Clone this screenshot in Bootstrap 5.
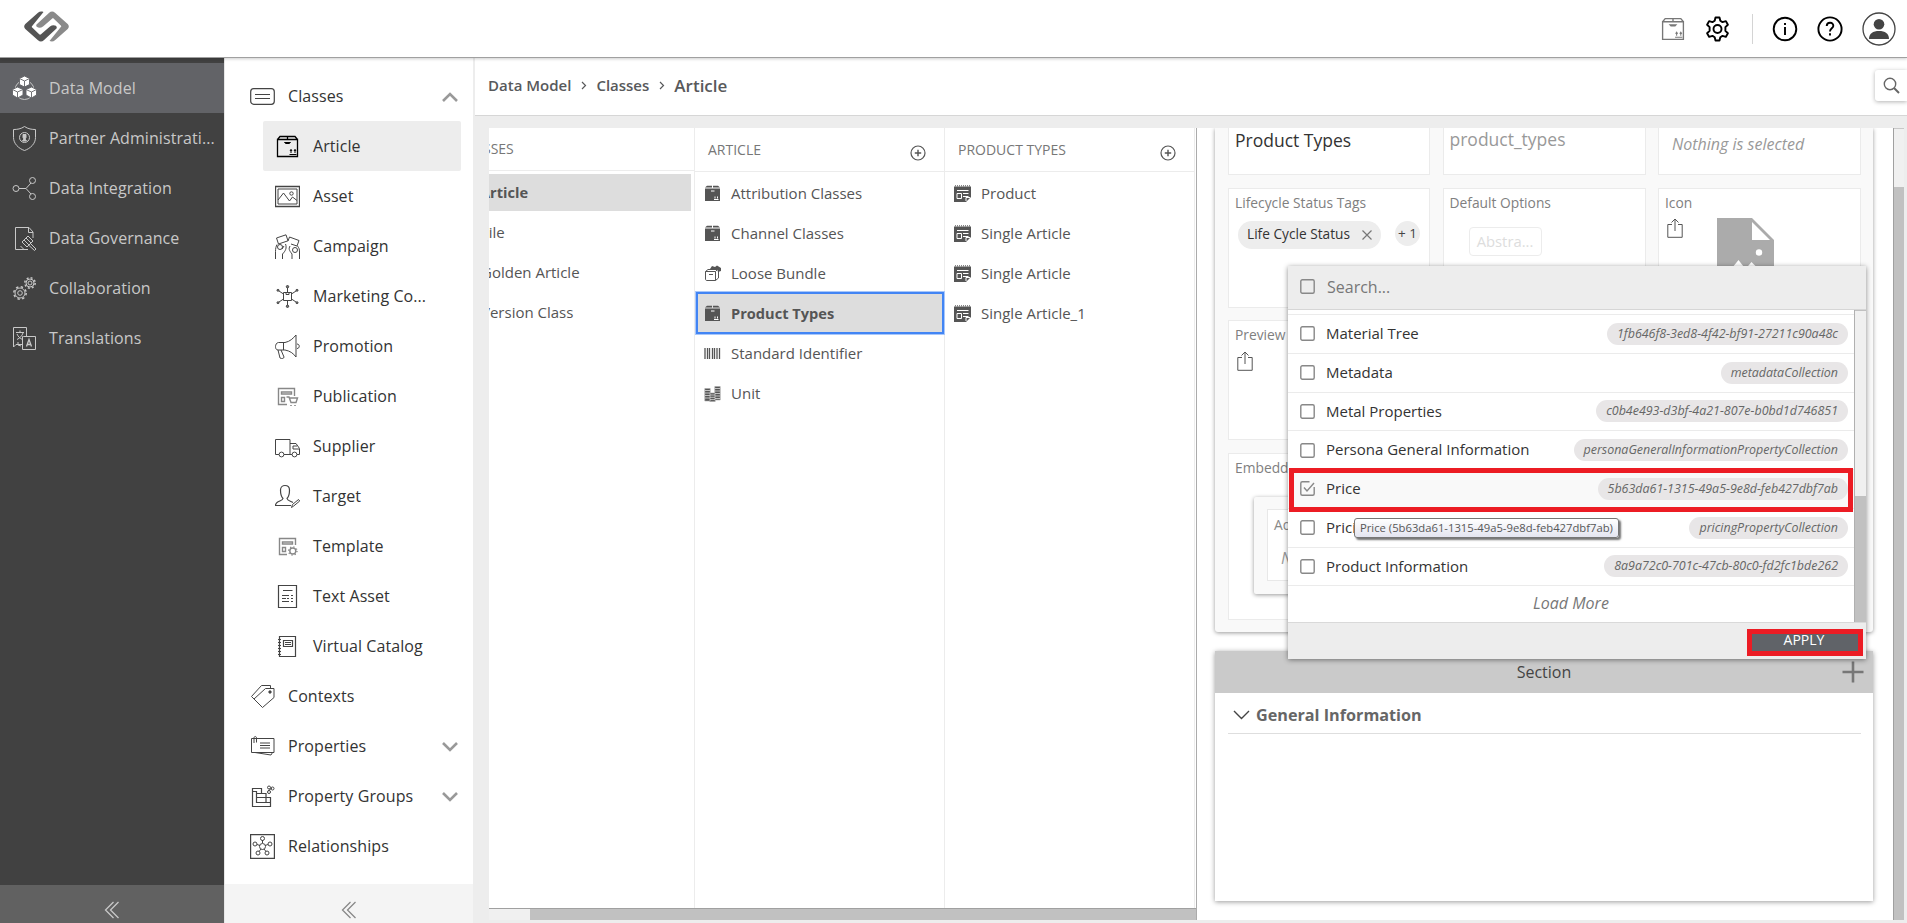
<!DOCTYPE html>
<html lang="en">
<head>
    <meta charset="UTF-8">
    <meta name="viewport" content="width=device-width, initial-scale=1.0">
    <title>Data Model - Classes - Article</title>
    <link rel="stylesheet" href="https://cdn.jsdelivr.net/npm/bootstrap@5.3.0/dist/css/bootstrap.min.css">
    <style>
        body { font-family: "Open Sans", "Noto Sans", sans-serif; font-size: 16px; line-height: 1.25; color: #333; background: #ededed; height: 923px; overflow: hidden; fill: none; stroke: currentColor; stroke-width: 1; }
        svg { display: block; flex: none; }
        .ic { width: 25px; height: 25px; }
        .topbar { height: 58px; border-bottom: 1px solid #a0a0a0; box-shadow: 0 1px 3px rgba(0,0,0,.2); z-index: 5; padding: 0 11px 0 24px; color: #000; }
        .topbar .logo { margin-top: -4px; }
        .topbar .divider { width: 1px; height: 30px; background: #d4d4d4; margin: 0 19px 0 22px; }
        .topbar .tool { margin-left: 19px; }
        .workspace { height: 865px; }

        /* left bars */
        .mainnav { width: 224px; background: #414141; color: #c8c8c8; padding-top: 5px; }
        .mainnav .entry { height: 50px; padding-left: 12px; gap: 12px; letter-spacing: .08px; }
        .mainnav .entry.current { background: #626367; }
        .mainnav .foldbar { height: 38px; background: #616161; padding-top: 11px; }
        .subnav { width: 249px; background: #fff; border-left: 1px solid #e6e6e6; padding-top: 13px; color: #333; letter-spacing: .08px; }
        .subnav .entry { height: 50px; flex: none; padding-left: 25px; gap: 13px; }
        .subnav .entry svg { color: #444; }
        .subnav .entry .chev { color: #999; margin: 2px 15px 0 auto; }
        .subnav .child { margin: 0 12px 0 38px; padding-left: 12px; border-radius: 2px; }
        .subnav .child.current { background: #ededed; }
        .subnav .child.current svg { color: #000; }
        .subnav .peek { height: 13px; overflow: hidden; }
        .subnav .foldbar { height: 39px; background: #f4f4f4; padding-top: 12px; color: #888; flex: none; }

        /* content */
        .crumbs { height: 58px; background: #fff; border-bottom: 1px solid #d6d6d6; padding: 0 0 2px 13px; margin-left: 2px; color: #58595b; font-weight: 600; font-size: 15px; }
        .crumbs .last { font-size: 17px; }
        .crumbs .sep { margin: 0 9px 0 10px; }
        .findbtn { width: 32px; height: 31px; background: #fff; border-radius: 3px 0 0 3px; box-shadow: 0 1px 4px rgba(0,0,0,.3); color: #666; margin-top: -1px; }
        .stage { margin: 12px 3px 3px 16px; height: 792px; background: #fff; }
        .tree { width: 708px; border-right: 1px solid #ababab; font-size: 15px; color: #555; }
        .level { width: 250px; border-right: 1px solid #ececec; flex: none; }
        .level.cut { width: 206px; overflow: hidden; }
        .level .head { height: 44px; border-bottom: 1px solid #ececec; padding: 0 18px 0 13px; font-size: 14px; color: #777; }
        .level .head svg { color: #555; margin-top: 7px; }
        .level .nodes { padding-top: 1px; }
        .level .node { height: 40px; padding-left: 9px; gap: 10px; }
        .level .node svg { width: 17px; height: 17px; color: #555; }
        .level .node.current { background: #ddd; font-weight: 700; font-size: 14.6px; margin: -1px 0 -1px 1px; height: 42px; border: 2px solid #4285f4; outline: 1px solid #a8c7fa; padding-left: 6px; }
        .level.cut .head { height: 43px; padding-left: 0; }
        .level.cut .head span { margin-left: -31px; }
        .level.cut .node { margin-left: -8px; padding-left: 0; position: relative; top: 1px; }
        .level.cut .picked { height: 37px; background: #ddd; font-weight: 700; font-size: 14.6px; margin: 3px 3px 0 0; }
        .level.cut .picked span { margin-left: -9px; }
        .hscroll { height: 12px; background: #c1c1c1; border-top: 1px solid #a0a0a0; }
        .hscroll div { width: 41px; background: #f0f0f0; height: 11px; }

        .sheet { padding-left: 18px; flex: 1; }
        .panel1 { width: 658px; height: 504px; background: #f9f9f9; padding: 0 12px 0 13px; border-radius: 0 0 3px 3px; box-shadow: 0 1px 4px rgba(0,0,0,.4); }
        .fields { display: grid; grid-template-columns: 202px 203px 203px; grid-template-rows: 47px 120px 120px 167px; column-gap: 12.5px; row-gap: 12.7px; }
        .cell { background: #fff; border: 1px solid #ebebeb; padding: 5px 6px; font-size: 13.8px; color: #808080; }
        .cell.first { border-top: 0; padding-top: 1px; font-size: 17.5px; }
        .cell.first.name { color: #333; padding-top: 2px; }
        .cell.first.none { font-size: 16px; padding: 6px 0 0 13px; }
        .cell.wide { grid-column: span 3; }
        .cell .share { color: #555; margin: 7px 0 0 2px; }
        .chips { margin-top: 10px; }
        .chip { width: 143px; height: 28px; border-radius: 14px; background: #ededed; color: #333; font-size: 13.7px; padding: 0 9px 2px; margin-left: 3px; }
        .chip svg { color: #777; margin-top: 2px; }
        .chip-more { width: 25px; height: 25px; border-radius: 50%; background: #ededed; color: #444; font-size: 13.5px; margin-left: 14px; }
        .ghost { width: 73px; height: 29px; border: 1px solid #ececec; border-radius: 4px; color: #ddd; font-size: 14.8px; margin: 16px 0 0 19px; }
        .nofile { margin-left: 34px; margin-top: 7px; }
        .nested { margin: 21px 18px 0 19px; height: 97px; background: #f9f9f9; box-shadow: 0 1px 4px rgba(0,0,0,.4); border-radius: 2px; padding: 12px 13px; }
        .nested div { height: 72px; border: 1px solid #e8e8e8; background: #fff; padding: 6px; color: #888; }
        .nested p { font-size: 16px; padding: 14px 7px; color: #999; }
        .panel2 { width: 658px; height: 250px; margin-top: 19px; background: #fff; box-shadow: 0 1px 5px rgba(0,0,0,.4); }
        .panel2 .title { height: 42px; background: #cacaca; color: #444; padding-right: 9px; }
        .panel2 .title svg { color: #777; margin-top: -1px; }
        .panel2 .group { height: 41px; margin: 0 12px 0 13px; border-bottom: 1px solid #dedede; font-weight: 700; font-size: 16.2px; color: #666; padding: 4px 0 0 5px; gap: 6px; }
        .panel2 .group svg { color: #444; }
        .vscroll { width: 11px; background: #c1c1c1; border-left: 1px solid #a0a0a0; }
        .vscroll div { height: 59px; background: #f0f0f0; border-top: 1px solid #c8c8c8; }

        /* picker that opens over the form */
        .picker { position: absolute; left: 1288px; top: 266px; width: 578px; height: 393px; background: #fff; box-shadow: 0 1px 5px rgba(0,0,0,.45); }
        .picker .find { height: 44px; background: #ededed; border-bottom: 1px solid #d6d6d6; padding: 0 0 2px 12px; gap: 12px; color: #777; }
        .picker .list { width: 566px; padding-top: 4px; height: 312px; }
        .picker .opt { height: 38.75px; border-top: 1px solid #ebebeb; padding: 0 6px 0 12px; gap: 11px; font-size: 15px; color: #333; }
        .picker .opt.chosen { background: #f9f9f9; }
        .picker .opt .label { margin-top: -1px; }
        .picker svg.box { width: 15px; height: 15px; color: #888; stroke-width: 1.4; }
        .picker .code { background: #e8e6e7; border-radius: 11px; height: 22px; line-height: 21px; padding: 0 10px; font-size: 12.45px; font-style: italic; color: #666; }
        .picker .more { border-top: 1px solid #ebebeb; height: 37px; font-style: italic; color: #777; padding-bottom: 2px; }
        .picker .bar { width: 12px; background: #c1c1c1; border-left: 1px solid #b0b0b0; }
        .picker .bar div { height: 186px; background: #f0f0f0; border-top: 1px solid #c0c0c0; }
        .picker .foot { height: 37px; background: #ededed; border-top: 1px solid #d9d9d9; }
        .ring { position: absolute; border: 5px solid #ec1c24; }
        .ring.price { left: 1289px; top: 468px; width: 564px; height: 44px; }
        .ring.apply { left: 1747px; top: 629px; width: 116px; height: 27px; background: #606368; color: #fff; font-size: 14px; line-height: 12px; padding-right: 2px; }
        .hint { position: absolute; left: 1354px; top: 518px; width: 265px; height: 20px; border: 1px solid #767676; border-radius: 3px; background: linear-gradient(#fff, #e4e5f0); box-shadow: 2px 2px 2px rgba(0,0,0,.55); font-size: 11.25px; line-height: 18px; color: #575757; padding-left: 5px; white-space: nowrap; }
    </style>
</head>
<body>
    <!-- icon set -->
    <svg class="d-none">
        <symbol id="fold" viewBox="0 0 16 18"><path d="M9.500 1 1.500 9l8 8M14.500 1l-8 8 8 8" stroke-width="1.300"/></symbol>
        <symbol id="up" viewBox="0 0 16 10"><path d="M1 9l7-7 7 7" stroke-width="2.600"/></symbol>
        <symbol id="down" viewBox="0 0 16 10"><path d="M1 1l7 7 7-7" stroke-width="2.600"/></symbol>
        <symbol id="box" viewBox="0 0 25 25"><path d="M2.500 5.500v17h20v-17zM2.500 5.500 5 2.500h15l2.500 3M12.500 2.500v3" stroke-width="1.300"/><path d="M9.500 8.500h6l-1 1h-4zM14.500 20.500h7M16 19v-3.500M20 19v-3.500M15 17l1-1.500 1 1.500M19 17l1-1.500 1 1.500"/></symbol>
        <symbol id="asset" viewBox="0 0 25 25"><path d="M.5 2.500h24v20H.5z" stroke-width="1.300"/><path d="M3 5h19v15H3zM3 16l5.500-7 6 8 3-4 4.500 3.500"/><circle cx="16.500" cy="9.500" r="1.700"/></symbol>
        <symbol id="campaign" viewBox="0 0 25 25"><path d="M1.500 4 11 .8l2 6L3.500 10zM13 7l1.500-4L24 6.500 22 12l-6-2M.5 25v-7.500c0-3 .5-5 1.500-7M7.500 25v-5c3-3 4.500-6 3-10M9 12l-2 3M17 25v-5c-3-4-3.500-5-2-8M24.500 25v-7c0-3-.5-4-2-6"/><circle cx="5" cy="13" r="2.500"/><circle cx="20" cy="16" r="2.500"/></symbol>
        <symbol id="market" viewBox="0 0 25 25"><path d="M8.500 8.500h8v8h-8zM11 8.500v2h3v-2M12.500 8.500V4M12.500 16.500V21M8.500 10 4 7M16.500 10 21 7M8.500 15 4 18M16.500 15l4.500 3"/><g fill="#777"><circle cx="12.500" cy="2.700" r="1.200"/><circle cx="12.500" cy="22.300" r="1.200"/><circle cx="3" cy="6.300" r="1"/><circle cx="22" cy="6.300" r="1"/><circle cx="3" cy="18.700" r="1"/><circle cx="22" cy="18.700" r="1"/></g></symbol>
        <symbol id="promo" viewBox="0 0 25 25"><path d="M7 8.500h3c5-1 8-4 11-7.500v22c-3-4-6-6-11-7H3C1 16 .5 14 .5 12.500S1.500 8.500 3.500 8.500H7M8.500 8.500V16M3 16l2 8c2 1 4 .5 4-1l-3-7M22 10c3 0 3 4.500 0 4.500"/></symbol>
        <symbol id="publish" viewBox="0 0 25 25"><g stroke="#888"><path d="M12 20.500H3.500v-16h16V12M6.500 8h10v2h-10zM6.500 13.500h3v4h-3zM11.500 13h2.500l2 5.500h5l1.500-4.500h-8" stroke-width="1.400"/><path d="M16 21v1M20 21v1" stroke-width="1.600"/></g></symbol>
        <symbol id="truck" viewBox="0 0 25 25"><path d="M4 20.500H.5V5.500H15v15H9M15 9.500h6l3.500 5v6H22M15 20.500h2M18 12v3h6M18 12h4"/><circle cx="6.500" cy="20.500" r="2.400"/><circle cx="19.500" cy="20.500" r="2.400"/></symbol>
        <symbol id="target" viewBox="0 0 25 25"><path d="M16 21.500H.5c0-5 7-4 7.500-7C5.500 12 5.500 9 5.500 6c0-6 9-6 9 0 0 3 0 6-2.500 8.500.3 2 3 2.500 6 4" stroke-width="1.200"/><path d="m16.500 23.500 1-3 6-5 1.200 1.500-6 5z"/></symbol>
        <symbol id="template" viewBox="0 0 25 25"><g stroke="#888"><path d="M12 20.500H4.500v-16h16V11M7.500 8h10v2h-10zM7.500 13.500h3v4h-3z" stroke-width="1.400"/><circle cx="17.800" cy="17" r="3" stroke-width="1.400"/><circle cx="17.800" cy="17" r="4.200" stroke-width="1.300" stroke-dasharray="1.200 2.100"/></g></symbol>
        <symbol id="text" viewBox="0 0 25 25"><path d="M3.500 1.500h18v22h-18zM8 6.500h9.500M7 11.500h7M16 11.500h2M7 14.500h4M12 14.500h2M16 14.500h2M7 17.500h7M16 17.500h2" stroke-width="1.200"/></symbol>
        <symbol id="catalog" viewBox="0 0 25 25"><path d="M4.500 2.500h16v20h-16zM8.500 6.500h9v6h-9zM10 8.500h6M10 10.500h6M3 5.500h3M3 8.500h3M3 11.500h3M3 14.500h3M3 17.500h3M3 20.500h3" stroke-width="1.200"/></symbol>
        <symbol id="classes" viewBox="0 0 25 25"><rect x=".7" y="4.700" width="23.600" height="15.600" rx="3" stroke-width="1.200"/><path d="M5 10.500h15M5 14.500h15" stroke-width="1.200"/></symbol>
        <symbol id="tag" viewBox="0 0 25 25"><path d="M12.500 23.500 1.500 12.500 11.500 1.500h9v3M4 15 15.500 4.500h8.500v9l-11.500 10"/><circle cx="20" cy="8" r="1.200" fill="currentColor"/></symbol>
        <symbol id="props" viewBox="0 0 25 25"><path d="M1.500 4.500h22.500v14H1.500zM10 9h10M10 11.500h10M10 14h10M5 18.500l16 2.500 1.500-2.500M4 9V4c0-2 2.500-2 2.500 0v4.500"/></symbol>
        <symbol id="groups" viewBox="0 0 25 25"><path d="M2.500 22.500v-18h9v5H16v4h4.500v9zM6.500 9.500v9h14M2.500 7.500h4v2h9.500M7 13.500h9v5" stroke-width="1.200"/><circle cx="19" cy="3.500" r="1.500"/><circle cx="22.500" cy="4.500" r="1.500"/><circle cx="19" cy="8" r="1.500"/><path d="m18 7 4-3"/></symbol>
        <symbol id="relations" viewBox="0 0 25 25"><path d="M.6.6h23.800v23.800H.6z" stroke-width="1.200"/><path d="M12.500 6v3M7 10.500l3 1M18 10.500l-3 1M9 17.500l2-2.500M16 17.500 14 15"/><circle cx="12.500" cy="12.500" r="3"/><circle cx="12.500" cy="4.500" r="2"/><circle cx="5" cy="10" r="2"/><circle cx="20" cy="10" r="2"/><circle cx="8" cy="19" r="2"/><circle cx="17" cy="19" r="2"/></symbol>
        <symbol id="linked" viewBox="0 0 25 25"><circle cx="21" cy="3" r="3"/><circle cx="5" cy="20" r="3"/><path d="m7 18 12-13"/></symbol>
        <symbol id="cubes" viewBox="0 0 25 25"><circle cx="12.500" cy="14" r="9.500"/><g fill="#fff" stroke="#626367" stroke-width=".9"><path d="m12.500 0 5 2.500v6l-5 2.500-5-2.500v-6z"/><path d="m5.500 11 5.500 2.500V19L5.500 22 .5 19v-5.500z"/><path d="m19.500 11 5 2.500V19l-5 3-5.500-3v-5.500z"/><path d="m7.500 2.500 5 2.500 5-2.500M12.500 5v6M.5 13.500 5.500 16l5.500-2.500M5.500 16v6M14 13.500l5.500 2.500 5-2.500M19.500 16v6"/></g></symbol>
        <symbol id="shield" viewBox="0 0 25 25"><path d="M12.500.5C9 3 5 3.500 1.500 3.500v8c0 6 5 11 11 13 6-2 11-7 11-13v-8c-3.500 0-7.500-.5-11-3z"/><circle cx="12.500" cy="11.500" r="5"/><path d="M11 8.500h3v3l-1 1.500 1.500 2h-4l1.500-2-1-1.500z" fill="currentColor"/></symbol>
        <symbol id="nodes" viewBox="0 0 25 25"><circle cx="4" cy="12.500" r="3"/><circle cx="20.500" cy="4.500" r="3"/><circle cx="20.500" cy="20.500" r="3"/><path d="M7 12.500h7l5-5.500M14 12.500l5 5.500"/></symbol>
        <symbol id="gavel" viewBox="0 0 25 25"><path d="M16 23.500H3.500v-22H17l4 4.500v6M16.500 1.500v5H21"/><path d="m10 16 6-6 5 5-6 6zM12 14l5 5M14 12l5 5M18 17l6 6-1.500 1.500-6-5.500M8.500 20l3 3"/></symbol>
        <symbol id="gears" viewBox="0 0 25 25"><circle cx="8" cy="17" r="2.300"/><circle cx="8" cy="17" r="5"/><circle cx="8" cy="17" r="6.200" stroke-width="1.500" stroke-dasharray="2.400 2.470"/><circle cx="18" cy="7" r="2"/><circle cx="18" cy="7" r="4"/><circle cx="18" cy="7" r="5.200" stroke-width="1.500" stroke-dasharray="2 2.080"/></symbol>
        <symbol id="translate" viewBox="0 0 25 25"><path d="M11 18.500H4L1.500 21V1.500h13V10M11.500 10.500h12v13h-13v-13zM4 6.500h8M8 4.500v2M5 8c1 2.500 3 4.500 5.500 5.500M11 7c-1 3-3 5-6 6.500M6 16v3l3 1"/><path d="m14.500 20.500 2.500-7 2.500 7M15.500 18.500h3" stroke-width="1.300"/></symbol>

        <symbol id="s-box" viewBox="0 0 17 17"><path d="M3 .8h5v1.700H1zM9 .8h5l2 1.700H9zM1 3.500h15V16H1z" fill="currentColor" stroke="none"/><path d="M7 6h3.500M10 14.500h4.500M11 13.500v-2M13.500 13.500v-2" stroke="#fff"/></symbol>
        <symbol id="s-bundle" viewBox="0 0 17 17"><path d="M1.500 6.500h10v9H3c-1 0-1.500-.5-1.500-1.500zM1.500 6.500 4 4.500h9.500l-2 2M11.500 15.500l3-2.500V4.500M5 9.500h4"/><path d="m6 4 2-3 3 1 2-1.500L17 3v3l-3 1-1-3z" fill="currentColor" stroke="none"/></symbol>
        <symbol id="s-bars" viewBox="0 0 17 17"><path d="M1 3v11M3.500 3v11M5.500 3v11M8.500 3v11M10.500 3v11M13 3v11M15.500 3v11" stroke-width="1.300"/></symbol>
        <symbol id="s-coins" viewBox="0 0 17 17"><g stroke="#aaa" fill="#555" stroke-width=".6"><path d="M.8 3.500h5.400V16H.8zM10.800 1.500h5.400V15h-5.400zM5.800 8h5.400v8.500H5.800z"/></g><path d="M1 5.500h5M1 8h5M1 10.500h5M1 13h5M11 3.500h5M11 6h5M11 8.500h5M11 11h5M11 13.500h5M6 10h5M6 12.300h5M6 14.600h5" stroke="#ddd" stroke-width=".8"/></symbol>
        <symbol id="s-sheet" viewBox="0 0 17 17"><path d="M0 1.500h17V12l-5 5H0z" fill="currentColor" stroke="none"/><path d="M1 .8h16" stroke-dasharray="1 1"/><path d="M3 5.500h11.500M3 8.500h4.500v5H3zM9 8.500h5.500M9 11.500h5.500M12 16v-3.500h4" stroke="#fff"/></symbol>

        <symbol id="plus" viewBox="0 0 16 16"><circle cx="8" cy="8" r="7" stroke-width="1.200"/><path d="M8 4.800v6.400M4.800 8h6.400" stroke-width="1.400"/></symbol>
        <symbol id="unchecked" viewBox="0 0 15 15"><rect x=".8" y=".8" width="13.400" height="13.400" rx="1.500"/></symbol>
        <symbol id="checked" viewBox="0 0 15 15"><path d="M9.500.8H2.300C1.300.8.8 1.300.8 2.300v10.400c0 1 .5 1.500 1.500 1.500h10.400c1 0 1.500-.5 1.500-1.500V6M4 6.500l3 3.500 7-8"/></symbol>
        <symbol id="share" viewBox="0 0 16 20"><path d="M5 6.500H.8v12.800h14.400V6.500H11M8 13V1M4.500 4.500 8 1l3.500 3.500"/></symbol>
        <symbol id="half" viewBox="0 0 45 31"><path stroke="none" d="M19.500.9c-2-.8-4-.6-5.500.8L1.300 13c-1.500 1.500-1.500 3.500 0 5L14 29.300c1.800 1.600 4 1.600 5.800 0L32.500 17.500c1.500-3-3.500-4.300-6.500-2L17 23.300c-.6.500-1.200.5-1.800 0L8.200 16.500c-.6-.6-.6-1 0-1.600z"/></symbol>
    </svg>

    <div class="topbar bg-white d-flex align-items-center position-relative">
        <svg class="logo" width="45" height="31" viewBox="0 0 45 31">
            <use href="#half" width="45" height="31" fill="#555"/>
            <use href="#half" width="45" height="31" fill="#8a8a8a" transform="rotate(180 22.500 15.500)"/>
        </svg>
        <svg class="ms-auto" width="26" height="26" viewBox="0 0 25 25" color="#777"><use href="#box"/></svg>
        <svg class="tool" width="25" height="26" viewBox="0 0 25 26" stroke-width="1.900"><path d="M10.500 1.500h4l.8 3.300 2.200 1.300 3.400-1 2 3.600-2.500 2.400v3.800l2.500 2.400-2 3.600-3.400-1-2.200 1.300-.8 3.300h-4l-.8-3.300-2.200-1.300-3.400 1-2-3.600 2.500-2.400v-3.800L2.100 8.700l2-3.600 3.400 1 2.200-1.300z" stroke-linejoin="round"/><circle cx="12.500" cy="13" r="4"/></svg>
        <div class="divider"></div>
        <svg width="26" height="26" viewBox="0 0 26 26" stroke-width="1.900"><circle cx="13" cy="13" r="11.300"/><path d="M13 11v8M13 7v2"/></svg>
        <svg class="tool" width="26" height="26" viewBox="0 0 26 26" stroke-width="1.900"><circle cx="13" cy="13" r="11.600"/><path d="M9.700 10c.3-4.500 7-4 6.600 0-.2 2.300-3.300 2.500-3.300 5.500M13 17.300v2.200"/></svg>
        <svg class="tool" width="34" height="34" viewBox="0 0 34 34" color="#444"><circle cx="17" cy="17" r="16" stroke-width="1.300"/><circle cx="17" cy="12.300" r="5.300" fill="#444" stroke="none"/><path d="M7 27c0-5.500 4-8 10-8s10 2.500 10 8z" fill="#444" stroke="none"/></svg>
    </div>

    <div class="workspace d-flex">
        <nav class="mainnav d-flex flex-column flex-shrink-0">
            <div class="entry current d-flex align-items-center"><svg class="ic"><use href="#cubes"/></svg>Data Model</div>
            <div class="entry d-flex align-items-center"><svg class="ic"><use href="#shield"/></svg>Partner Administrati...</div>
            <div class="entry d-flex align-items-center"><svg class="ic"><use href="#nodes"/></svg>Data Integration</div>
            <div class="entry d-flex align-items-center"><svg class="ic"><use href="#gavel"/></svg>Data Governance</div>
            <div class="entry d-flex align-items-center"><svg class="ic"><use href="#gears"/></svg>Collaboration</div>
            <div class="entry d-flex align-items-center"><svg class="ic"><use href="#translate"/></svg>Translations</div>
            <div class="foldbar mt-auto d-flex justify-content-center align-items-center"><svg width="16" height="18"><use href="#fold"/></svg></div>
        </nav>

        <nav class="subnav d-flex flex-column flex-shrink-0">
            <div class="entry d-flex align-items-center"><svg class="ic"><use href="#classes"/></svg>Classes<svg class="chev" width="16" height="10"><use href="#up"/></svg></div>
            <div class="entry child current d-flex align-items-center"><svg class="ic"><use href="#box"/></svg>Article</div>
            <div class="entry child d-flex align-items-center"><svg class="ic"><use href="#asset"/></svg>Asset</div>
            <div class="entry child d-flex align-items-center"><svg class="ic"><use href="#campaign"/></svg>Campaign</div>
            <div class="entry child d-flex align-items-center"><svg class="ic"><use href="#market"/></svg>Marketing Co...</div>
            <div class="entry child d-flex align-items-center"><svg class="ic"><use href="#promo"/></svg>Promotion</div>
            <div class="entry child d-flex align-items-center"><svg class="ic"><use href="#publish"/></svg>Publication</div>
            <div class="entry child d-flex align-items-center"><svg class="ic"><use href="#truck"/></svg>Supplier</div>
            <div class="entry child d-flex align-items-center"><svg class="ic"><use href="#target"/></svg>Target</div>
            <div class="entry child d-flex align-items-center"><svg class="ic"><use href="#template"/></svg>Template</div>
            <div class="entry child d-flex align-items-center"><svg class="ic"><use href="#text"/></svg>Text Asset</div>
            <div class="entry child d-flex align-items-center"><svg class="ic"><use href="#catalog"/></svg>Virtual Catalog</div>
            <div class="entry d-flex align-items-center"><svg class="ic"><use href="#tag"/></svg>Contexts</div>
            <div class="entry d-flex align-items-center"><svg class="ic"><use href="#props"/></svg>Properties<svg class="chev" width="16" height="10"><use href="#down"/></svg></div>
            <div class="entry d-flex align-items-center"><svg class="ic"><use href="#groups"/></svg>Property Groups<svg class="chev" width="16" height="10"><use href="#down"/></svg></div>
            <div class="entry d-flex align-items-center"><svg class="ic"><use href="#relations"/></svg>Relationships</div>
            <div class="peek"><div class="entry d-flex align-items-center"><svg class="ic"><use href="#linked"/></svg></div></div>
            <div class="foldbar mt-auto d-flex justify-content-center align-items-center"><svg width="16" height="18"><use href="#fold"/></svg></div>
        </nav>

        <main class="flex-grow-1">
            <div class="crumbs d-flex align-items-center">
                <span>Data Model</span>
                <svg class="sep" width="6" height="9" viewBox="0 0 6 9"><path d="M1 1l3.500 3.500L1 8" stroke-width="1.200"/></svg>
                <span>Classes</span>
                <svg class="sep" width="6" height="9" viewBox="0 0 6 9"><path d="M1 1l3.500 3.500L1 8" stroke-width="1.200"/></svg>
                <span class="last">Article</span>
                <div class="findbtn ms-auto d-flex align-items-center justify-content-center"><svg width="17" height="17" viewBox="0 0 17 17" stroke-width="1.400"><circle cx="7" cy="7" r="5.700"/><path d="m11 11 5 5" stroke-width="2"/></svg></div>
            </div>

            <div class="stage d-flex">
                <div class="tree d-flex flex-column flex-shrink-0">
                    <div class="d-flex flex-grow-1">
                        <div class="level cut">
                            <div class="head d-flex align-items-center"><span>CLASSES</span></div>
                            <div class="picked d-flex align-items-center"><span>Article</span></div>
                            <div class="node d-flex align-items-center">File</div>
                            <div class="node d-flex align-items-center">Golden Article</div>
                            <div class="node d-flex align-items-center">Version Class</div>
                        </div>
                        <div class="level">
                            <div class="head d-flex align-items-center">ARTICLE<svg class="ms-auto" width="16" height="16"><use href="#plus"/></svg></div>
                            <div class="nodes">
                                <div class="node d-flex align-items-center"><svg><use href="#s-box"/></svg>Attribution Classes</div>
                                <div class="node d-flex align-items-center"><svg><use href="#s-box"/></svg>Channel Classes</div>
                                <div class="node d-flex align-items-center"><svg><use href="#s-bundle"/></svg>Loose Bundle</div>
                                <div class="node current d-flex align-items-center"><svg><use href="#s-box"/></svg>Product Types</div>
                                <div class="node d-flex align-items-center"><svg><use href="#s-bars"/></svg>Standard Identifier</div>
                                <div class="node d-flex align-items-center"><svg><use href="#s-coins"/></svg>Unit</div>
                            </div>
                        </div>
                        <div class="level">
                            <div class="head d-flex align-items-center">PRODUCT TYPES<svg class="ms-auto" width="16" height="16"><use href="#plus"/></svg></div>
                            <div class="nodes">
                                <div class="node d-flex align-items-center"><svg><use href="#s-sheet"/></svg>Product</div>
                                <div class="node d-flex align-items-center"><svg><use href="#s-sheet"/></svg>Single Article</div>
                                <div class="node d-flex align-items-center"><svg><use href="#s-sheet"/></svg>Single Article</div>
                                <div class="node d-flex align-items-center"><svg><use href="#s-sheet"/></svg>Single Article_1</div>
                            </div>
                        </div>
                    </div>
                    <div class="hscroll"><div></div></div>
                </div>

                <div class="sheet overflow-hidden">
                    <div class="panel1">
                        <div class="fields">
                            <div class="cell first name">Product Types</div>
                            <div class="cell first" style="color:#999">product_types</div>
                            <div class="cell first none fst-italic" style="color:#999">Nothing is selected</div>
                            <div class="cell">Lifecycle Status Tags
                                <div class="chips d-flex">
                                    <div class="chip d-flex align-items-center justify-content-between">Life Cycle Status<svg width="10" height="10" viewBox="0 0 10 10"><path d="M.5.5l9 9M9.500.5l-9 9" stroke-width="1.200"/></svg></div>
                                    <div class="chip-more d-flex align-items-center justify-content-center">+ 1</div>
                                </div>
                            </div>
                            <div class="cell">Default Options
                                <div class="ghost d-flex align-items-center justify-content-center">Abstra...</div>
                            </div>
                            <div class="cell">Icon
                                <div class="d-flex">
                                    <svg class="share" width="16" height="20"><use href="#share"/></svg>
                                    <svg class="nofile" width="57" height="70" viewBox="0 0 57 70" stroke="none"><path d="M0 0h35l22 22v48H0z" fill="#ababab"/><path d="M35 4v18h18z" fill="#fff"/><circle cx="42" cy="34.500" r="3.200" fill="#fff"/><path d="m11 55 10.500-13 7 9 6-7 13 13z" fill="#fff"/></svg>
                                </div>
                            </div>
                            <div class="cell">Preview<svg class="share" width="16" height="20"><use href="#share"/></svg></div>
                            <div class="cell"></div>
                            <div class="cell"></div>
                            <div class="cell wide">Embedded Classes
                                <div class="nested"><div>Add Classes<p class="fst-italic m-0">Nothing is selected</p></div></div>
                            </div>
                        </div>
                    </div>
                    <div class="panel2">
                        <div class="title d-flex align-items-center"><span class="mx-auto" style="padding-left:31px">Section</span><svg width="22" height="22" viewBox="0 0 22 22" stroke-width="2.600"><path d="M11 .5v21M.5 11h21"/></svg></div>
                        <div class="group d-flex align-items-center"><svg width="17" height="10" viewBox="0 0 17 10" stroke-width="1.400"><path d="M1 1l7.500 7.500L16 1"/></svg>General Information</div>
                    </div>
                </div>
                <div class="vscroll"><div></div></div>
            </div>
        </main>
    </div>

    <div class="picker">
        <div class="find d-flex align-items-center"><svg class="box"><use href="#unchecked"/></svg>Search...</div>
        <div class="d-flex">
            <div class="list">
                <div class="opt d-flex align-items-center"><svg class="box"><use href="#unchecked"/></svg><span class="label">Material Tree</span><span class="code ms-auto">1fb646f8-3ed8-4f42-bf91-27211c90a48c</span></div>
                <div class="opt d-flex align-items-center"><svg class="box"><use href="#unchecked"/></svg><span class="label">Metadata</span><span class="code ms-auto">metadataCollection</span></div>
                <div class="opt d-flex align-items-center"><svg class="box"><use href="#unchecked"/></svg><span class="label">Metal Properties</span><span class="code ms-auto">c0b4e493-d3bf-4a21-807e-b0bd1d746851</span></div>
                <div class="opt d-flex align-items-center"><svg class="box"><use href="#unchecked"/></svg><span class="label">Persona General Information</span><span class="code ms-auto">personaGeneralInformationPropertyCollection</span></div>
                <div class="opt chosen d-flex align-items-center"><svg class="box"><use href="#checked"/></svg><span class="label">Price</span><span class="code ms-auto">5b63da61-1315-49a5-9e8d-feb427dbf7ab</span></div>
                <div class="opt d-flex align-items-center"><svg class="box"><use href="#unchecked"/></svg><span class="label">Pricing</span><span class="code ms-auto">pricingPropertyCollection</span></div>
                <div class="opt d-flex align-items-center"><svg class="box"><use href="#unchecked"/></svg><span class="label">Product Information</span><span class="code ms-auto">8a9a72c0-701c-47cb-80c0-fd2fc1bde262</span></div>
                <div class="more d-flex align-items-center justify-content-center">Load More</div>
            </div>
            <div class="bar"><div></div></div>
        </div>
        <div class="foot"></div>
    </div>
    <div class="ring price"></div>
    <div class="ring apply text-center">APPLY</div>
    <div class="hint">Price (5b63da61-1315-49a5-9e8d-feb427dbf7ab)</div>

    <script src="https://cdn.jsdelivr.net/npm/bootstrap@5.3.0/dist/js/bootstrap.bundle.min.js"></script>
</body>
</html>
